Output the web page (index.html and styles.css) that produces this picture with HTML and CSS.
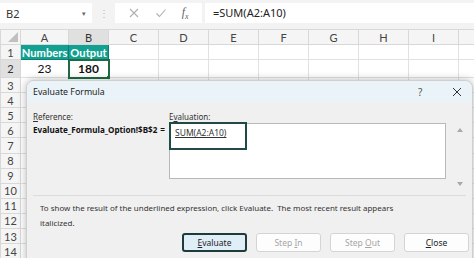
FILE: index.html
```html
<!DOCTYPE html>
<html lang="en">

<head>
    <meta charset="UTF-8">
    <meta name="viewport" content="width=device-width, initial-scale=1.0">
    <title>Evaluate Formula</title>
    <link rel="stylesheet" href="styles.css">
</head>

<body>
    <div id="formula-bar">
        <div class="name-box">
            <span>B2</span>
            <span class="caret">&#9662;</span>
        </div>
        <div class="grip">&#8942;</div>
        <div class="fx-box">
            <svg class="fx-icon" width="12" height="12" viewBox="0 0 12 12">
                <path d="M2 2 L10 10 M10 2 L2 10" stroke="#b0b0b0" stroke-width="1.1" fill="none" />
            </svg>
            <svg class="fx-icon" width="12" height="12" viewBox="0 0 12 12">
                <path d="M1.5 6.5 L4.5 9.5 L10.5 2.5" stroke="#b0b0b0" stroke-width="1.1" fill="none" />
            </svg>
            <span class="fx">f<sub>x</sub></span>
        </div>
        <div class="formula-input">=SUM(A2:A10)</div>
    </div>

    <table id="sheet">
        <colgroup>
            <col class="c-head">
            <col class="c-a">
            <col class="c-b">
            <col class="c-std"><col class="c-std"><col class="c-std"><col class="c-std">
            <col class="c-std"><col class="c-std"><col class="c-std"><col class="c-end">
        </colgroup>
        <tr class="col-heads">
            <th class="corner"><span class="corner-tri"></span></th>
            <th>A</th><th class="sel">B</th><th>C</th><th>D</th><th>E</th>
            <th>F</th><th>G</th><th>H</th><th>I</th><th></th>
        </tr>
        <tr class="r1">
            <th>1</th>
            <td class="hdr">Numbers</td><td class="hdr">Output</td>
            <td></td><td></td><td></td><td></td><td></td><td></td><td></td><td></td>
        </tr>
        <tr class="r2">
            <th class="sel">2</th>
            <td class="num">23</td>
            <td class="num active">180<span class="handle"></span></td>
            <td></td><td></td><td></td><td></td><td></td><td></td><td></td><td></td>
        </tr>
        <tr><th>3</th><td class="num">56</td><td></td><td></td><td></td><td></td><td></td><td></td><td></td><td></td><td></td></tr>
        <tr><th>4</th><td></td><td></td><td></td><td></td><td></td><td></td><td></td><td></td><td></td><td></td></tr>
        <tr><th>5</th><td></td><td></td><td></td><td></td><td></td><td></td><td></td><td></td><td></td><td></td></tr>
        <tr><th>6</th><td></td><td></td><td></td><td></td><td></td><td></td><td></td><td></td><td></td><td></td></tr>
        <tr><th>7</th><td></td><td></td><td></td><td></td><td></td><td></td><td></td><td></td><td></td><td></td></tr>
        <tr><th>8</th><td></td><td></td><td></td><td></td><td></td><td></td><td></td><td></td><td></td><td></td></tr>
        <tr><th>9</th><td></td><td></td><td></td><td></td><td></td><td></td><td></td><td></td><td></td><td></td></tr>
        <tr><th>10</th><td></td><td></td><td></td><td></td><td></td><td></td><td></td><td></td><td></td><td></td></tr>
        <tr><th>11</th><td></td><td></td><td></td><td></td><td></td><td></td><td></td><td></td><td></td><td></td></tr>
        <tr><th>12</th><td></td><td></td><td></td><td></td><td></td><td></td><td></td><td></td><td></td><td></td></tr>
        <tr><th>13</th><td></td><td></td><td></td><td></td><td></td><td></td><td></td><td></td><td></td><td></td></tr>
        <tr><th>14</th><td></td><td></td><td></td><td></td><td></td><td></td><td></td><td></td><td></td><td></td></tr>
    </table>

    <!-- dialog floats over the sheet -->
    <div id="dialog">
        <div class="dlg-title">
            <span>Evaluate Formula</span>
            <span class="dlg-help">?</span>
            <svg class="dlg-close" width="10" height="10" viewBox="0 0 10 10">
                <path d="M1 1 L9 9 M9 1 L1 9" stroke="#333" stroke-width="1" fill="none" />
            </svg>
        </div>
        <div class="dlg-body">
            <div class="eval-row">
                <div class="ref-col">
                    <div class="label"><u>R</u>eference:</div>
                    <div class="ref-value">
                        <span>Evaluate_Formula_Option!$B$2</span>
                        <span>=</span>
                    </div>
                </div>
                <div class="eval-col">
                    <div class="label">E<u>v</u>aluation:</div>
                    <div class="eval-box">
                        <div class="expr"><u>SUM(A2:A10)</u></div>
                    </div>
                </div>
                <div class="scroll-col">
                    <span class="arrow up"></span>
                    <span class="arrow down"></span>
                </div>
            </div>
            <div class="divider"></div>
            <p class="hint">To show the result of the underlined expression, click Evaluate.&nbsp; The most recent result appears italicized.</p>
            <div class="buttons">
                <button class="btn primary"><u>E</u>valuate</button>
                <button class="btn" disabled>Step <u>I</u>n</button>
                <button class="btn" disabled>Step <u>O</u>ut</button>
                <button class="btn"><u>C</u>lose</button>
            </div>
        </div>
    </div>
</body>

</html>
```

FILE: styles.css
```css
* {
    margin: 0;
    padding: 0;
    box-sizing: border-box;
}

html,
body {
    width: 474px;
    height: 258px;
    overflow: hidden;
    background-color: #ffffff;
    font-family: "Noto Sans", "Open Sans", sans-serif;
    color: #222;
}

body {
    position: relative;
}

/* formula bar */
#formula-bar {
    display: flex;
    align-items: center;
    height: 29px;
    padding: 3px 0 6px 0;
    background-color: #f3f3f3;
}

.name-box {
    display: flex;
    align-items: center;
    justify-content: space-between;
    width: 92px;
    height: 20px;
    padding: 0 6px 0 6px;
    background-color: white;
    font-size: 11px;
    color: #333;
}

.caret {
    font-size: 7px;
    color: #666;
}

.grip {
    width: 23px;
    text-align: center;
    font-size: 10px;
    color: #b8b8b8;
}

.fx-box {
    display: flex;
    align-items: center;
    justify-content: space-around;
    width: 87px;
    height: 20px;
    padding: 0 6px;
    background-color: white;
}

.fx {
    font-family: "Liberation Serif", serif;
    font-style: italic;
    font-size: 12px;
    color: #666;
}

.fx sub {
    font-size: 8px;
}

.formula-input {
    flex: 1;
    height: 20px;
    margin-left: 3px;
    padding: 2px 0 0 8px;
    background-color: white;
    font-size: 11px;
    color: #222;
}

/* sheet */
#sheet {
    border-collapse: collapse;
    table-layout: fixed;
    width: 474px;
    font-family: "Lato", "Liberation Sans", sans-serif;
}

.c-head { width: 20px; }
.c-a { width: 48px; }
.c-b { width: 40px; }
.c-std { width: 50px; }
.c-end { width: 16px; }

#sheet th,
#sheet td {
    height: 15.1px;
    border: 1px solid #e1e1e1;
    padding: 0;
    font-size: 11px;
    line-height: 13px;
    text-align: center;
    overflow: hidden;
    white-space: nowrap;
}

#sheet th {
    background-color: #f5f5f5;
    color: #444;
    font-weight: normal;
    border-color: #d8d8d8;
}

.col-heads th {
    height: 15px;
    border-bottom: 1px solid #c8c8c8;
}

#sheet th.sel {
    background-color: #e0e0e0;
    color: #333;
}

.corner {
    position: relative;
}

.corner-tri {
    position: absolute;
    right: 2px;
    bottom: 2px;
    width: 0;
    height: 0;
    border-left: 10px solid transparent;
    border-bottom: 10px solid #c0c0c0;
}

#sheet .r1 td.hdr {
    background-color: #11a091;
    color: white;
    font-weight: bold;
    font-size: 11.2px;
    border-color: #0c7d70;
}

#sheet .r1 th,
#sheet .r1 td {
    height: 15px;
}

#sheet .r2 th,
#sheet .r2 td {
    height: 18px;
}

#sheet td.num {
    font-size: 12px;
    color: #111;
}

td.active {
    position: relative;
    font-weight: bold;
    outline: 2px solid #1e6b43;
    outline-offset: -1px;
}

.handle {
    position: absolute;
    right: -3px;
    bottom: -3px;
    width: 5px;
    height: 5px;
    background-color: #1e6b43;
    border: 1px solid white;
}

/* dialog */
#dialog {
    position: absolute;
    left: 26px;
    top: 80px;
    width: 447px;
    height: 190px;
    background-color: #f0f0f0;
    border: 1px solid #cfcfcf;
    border-radius: 8px 8px 0 0;
    box-shadow: 0 0 8px rgba(0, 0, 0, 0.28);
    font-family: "Noto Sans", "Open Sans", sans-serif;
    overflow: hidden;
}

.dlg-title {
    display: flex;
    align-items: center;
    height: 21px;
    padding: 0 0 0 6px;
    background-color: #eaf4f8;
    font-size: 8.8px;
    color: #222;
}

.dlg-title span:first-child {
    flex: 1;
}

.dlg-help {
    width: 22px;
    font-size: 10px;
    color: #555;
}

.dlg-close {
    margin: 0 10px 0 12px;
}

.dlg-body {
    padding: 8px 0 0 6px;
}

.eval-row {
    display: flex;
}

.label {
    font-size: 8px;
    line-height: 13px;
    color: #333;
}

.ref-col {
    flex-shrink: 0;
    width: 136px;
}

.ref-value {
    display: flex;
    justify-content: space-between;
    padding-right: 4px;
    font-size: 8.1px;
    font-weight: bold;
    line-height: 14px;
    color: #111;
}

.eval-col {
    flex-shrink: 0;
    width: 277px;
}

.eval-box {
    height: 56px;
    background-color: white;
    border: 1px solid #b8b8b8;
}

.expr {
    width: 78px;
    height: 28px;
    margin: -2px 0 0 -1px;
    padding: 3px 0 0 4px;
    border: 2px solid #1f4a45;
    font-size: 8.5px;
    line-height: 12px;
    color: #333;
}

.scroll-col {
    flex: 1;
    display: flex;
    flex-direction: column;
    justify-content: space-between;
    align-items: flex-start;
    height: 80px;
    padding: 18px 0 4px 11px;
}

.arrow {
    width: 0;
    height: 0;
    border-left: 3.5px solid transparent;
    border-right: 3.5px solid transparent;
}

.arrow.up {
    border-bottom: 4px solid #a8a8a8;
}

.arrow.down {
    border-top: 4px solid #a8a8a8;
}

.divider {
    height: 1px;
    margin: 5px 6px 0 0;
    background-color: #dcdcdc;
}

.hint {
    padding: 5px 0 0 7px;
    width: 374px;
    font-size: 7.95px;
    line-height: 15px;
    color: #333;
}

.buttons {
    display: flex;
    gap: 9px;
    padding: 2px 0 0 149px;
}

.btn {
    width: 65px;
    height: 19px;
    background-color: #fdfdfd;
    border: 1px solid #d4d4d4;
    border-radius: 3px;
    font-family: "Noto Sans", "Open Sans", sans-serif;
    font-size: 8.5px;
    color: #222;
}

.btn:disabled {
    color: #a6a6a6;
}

.btn.primary {
    background-color: #dfeef7;
    border: 2px solid #1c3d3a;
}
```
